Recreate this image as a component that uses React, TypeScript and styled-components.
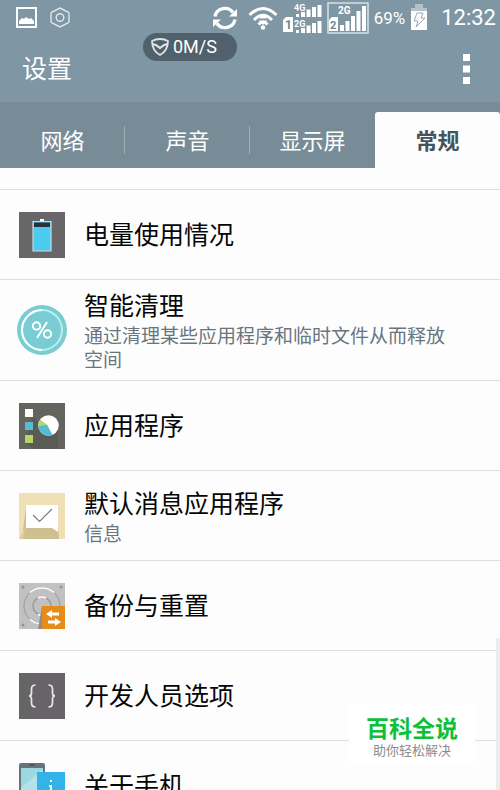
import React from 'react';
import styled, { createGlobalStyle, css } from 'styled-components';

const GlobalStyle = createGlobalStyle`
  *, *::before, *::after { box-sizing: border-box; }
  body {
    margin: 0;
    background: #fdfdfd;
    font-family: Roboto, 'Noto Sans CJK SC', sans-serif;
  }
  button { font: inherit; border: 0; padding: 0; margin: 0; background: none; cursor: pointer; }
  h1, p { margin: 0; }
  svg { display: block; flex: none; }
`;

const Screen = styled.div`
  position: relative;
  display: flex;
  flex-direction: column;
  height: 100vh;
  overflow: hidden;
  background: #fdfdfd;
`;

const Header = styled.header`
  position: relative;
  flex: none;
  background: #7f96a4;
  color: #fff;
`;

const StatusBar = styled.div`
  display: flex;
  align-items: center;
  justify-content: space-between;
  height: 35px;
  padding: 0 4px 0 16px;
`;

const StatusGroup = styled.div<{ $gap: number }>`
  display: flex;
  align-items: center;
  gap: ${({ $gap }) => $gap}px;
`;

const Percent = styled.span`
  font-size: 17px;
  line-height: 20px;
`;

const Clock = styled.time`
  margin-left: 8px;
  font-size: 22px;
  line-height: 28px;
`;

const SpeedPill = styled.div`
  position: absolute;
  top: 33px;
  left: 143px;
  display: flex;
  align-items: center;
  gap: 4px;
  height: 28px;
  padding: 0 20px 0 8px;
  border-radius: 14px;
  background: #50616c;
  font-size: 18px;
  line-height: 28px;
`;

const TitleBar = styled.div`
  display: flex;
  align-items: center;
  justify-content: space-between;
  height: 67px;
  padding: 0 22px;
`;

const Title = styled.h1`
  padding-top: 2px;
  font-size: 25px;
  font-weight: 400;
  line-height: 36px;
`;

const MenuButton = styled.button`
  display: flex;
  justify-content: center;
  width: 24px;
  color: #fff;
`;

const Tabs = styled.nav`
  display: grid;
  flex: none;
  grid-template-columns: repeat(4, 1fr);
  height: 66px;
  padding-top: 10px;
  background: #778c97;
`;

const Tab = styled.button<{ $active: boolean; $divided: boolean }>`
  display: flex;
  align-items: center;
  justify-content: center;
  position: relative;
  padding-top: 4px;
  font-size: 22px;
  line-height: 32px;
  color: #fff;
  ${({ $active }) => $active && css`
    background: #fdfdfd;
    color: #44535e;
    font-weight: 700;
    border-radius: 3px 3px 0 0;
  `}
  ${({ $divided }) => $divided && css`
    &::after {
      content: '';
      position: absolute;
      right: 0;
      top: 14px;
      width: 1px;
      height: 28px;
      background: #a0afb7;
    }
  `}
`;

const List = styled.main`
  flex: 1;
  min-height: 0;
  padding-top: 21px;
  overflow: hidden;
`;

const Row = styled.button`
  display: flex;
  align-items: center;
  gap: 16px;
  width: 100%;
  min-height: 90px;
  padding: 7px 40px 7px 16px;
  border-top: 1px solid #dedede;
  text-align: left;
`;

const RowText = styled.span`
  display: flex;
  flex-direction: column;
  min-width: 0;
  padding-top: 2px;
`;

const RowTitle = styled.span`
  font-size: 25px;
  line-height: 36px;
  color: #050505;
`;

const RowNote = styled.span`
  font-size: 19px;
  line-height: 24px;
  color: #69757d;
`;

const ScrollThumb = styled.div`
  position: absolute;
  top: 638px;
  right: 0;
  bottom: 0;
  width: 4px;
  background: #ececee;
`;

const Watermark = styled.aside`
  position: absolute;
  right: 25px;
  bottom: 25px;
  width: 126px;
  padding: 14px 0 5px;
  border-radius: 3px;
  background: #fff;
  text-align: center;
`;

const Brand = styled.p`
  font-size: 23px;
  font-weight: 700;
  line-height: 24px;
  color: #0bc138;
`;

const Slogan = styled.p`
  font-size: 13px;
  line-height: 18px;
  color: #8c8c8c;
`;

const PictureIcon = () => (
  <svg width="21" height="21" viewBox="0 0 21 21">
    <path d="M1 1h19v19H1z" fill="none" stroke="#fff" strokeWidth="2" />
    <path d="M3 17v-3l3-3 2 1 2-2 3 2 2-1 3 3v3z" fill="#fff" />
  </svg>
);

const HexIcon = () => (
  <svg width="20" height="21" viewBox="0 0 20 21" fill="none" stroke="#dfe8ed" strokeWidth="1.4">
    <path d="M10 1l8 4q1 .6 1 2v7q0 1.400-1 2l-8 4-8-4q-1-.6-1-2V7q0-1.400 1-2z" />
    <circle cx="10" cy="10.500" r="3.800" />
  </svg>
);

const SyncSvg = styled.svg`
  margin-right: 5px;
`;

const SyncIcon = () => (
  <SyncSvg width="26" height="24" viewBox="0 0 26 24">
    <g fill="none" stroke="#fff" strokeWidth="3.400">
      <path d="M3 10.500C4.500 2 16 -.5 21 6.500" />
      <path d="M23 13.500C21.500 22 10 24.500 5 17.500" />
    </g>
    <path d="M25 3v7.500h-8zM1 21v-7.500h8z" fill="#fff" />
  </SyncSvg>
);

const WifiIcon = () => (
  <svg width="30" height="24" viewBox="0 0 30 24">
    <g fill="none" stroke="#fff" strokeWidth="3">
      <path d="M1.500 9Q15-4 28.500 9" />
      <path d="M6 14Q15 4.500 24 14" />
      <path d="M10.500 18.500Q15 13.500 19.500 18.500" />
    </g>
    <circle cx="15" cy="21.500" r="2.300" fill="#fff" />
    <path d="M15 8l4 4.500h-8zM10.500 14.500h9L15 19z" fill="#fff" />
    <path d="M10 13.500h10" stroke="#7f96a4" strokeWidth="1" />
  </svg>
);

const SignalSvg = styled.svg`
  font-family: Roboto, sans-serif;
  font-weight: 700;
`;

const DualSignalIcon = () => (
  <SignalSvg width="39" height="32" viewBox="0 0 39 32" fill="#fff">
    <path d="M3 15h7v15H0V18z" />
    <text x="2" y="27" fontSize="12" fill="#72858f">1</text>
    <path d="M13 12h3v3h-3zM18 10h4v5h-4zM23.500 7.500h4V15h-4zM29 5h4v10h-4zM34.500 3h4v12h-4z" />
    <path d="M13 28h3v3h-3zM18 26h4v5h-4zM23.500 23.500h4V31h-4zM29 21h4v10h-4zM34.500 19h4v12h-4z" />
    <text x="11" y="9" fontSize="9">4G</text>
    <text x="11" y="25" fontSize="9">2G</text>
  </SignalSvg>
);

const SignalIcon = () => (
  <SignalSvg width="42" height="32" viewBox="0 0 42 32" fill="#fff">
    <path d="M1 1h40v30H1z" fill="none" stroke="#d5e0e7" strokeWidth="1.600" />
    <path d="M5 15h6v14H2V18z" />
    <text x="3" y="27" fontSize="11" fill="#72858f">2</text>
    <path d="M13 23h4v6h-4zM18.500 19h4v10h-4zM24 14h4v15h-4zM29.500 9h4v20h-4zM35 4h4v25h-4z" />
    <text x="11" y="12" fontSize="10">2G</text>
  </SignalSvg>
);

const BatteryIcon = () => (
  <svg width="18" height="27" viewBox="0 0 18 27">
    <path d="M5 0h8v4h4v4H1V4h4z" fill="#b4c1c9" />
    <path d="M1 7h16v19H1z" fill="#fff" />
    <path d="M7 9h6l-2 5h4L6 23l2-6H4z" fill="#fff" stroke="#9caab2" strokeWidth="1" />
  </svg>
);

const ShieldIcon = () => (
  <svg width="18" height="18" viewBox="0 0 18 18" fill="none" stroke="#dfe5e8" strokeWidth="1.800">
    <path d="M9 1q4.500 0 8 2-.2 10-8 14Q1.200 13 1 3q3.500-2 8-2z" strokeLinejoin="round" />
    <path d="M2 6q3 .5 7 4 4-3.500 7-4" strokeWidth="2.200" />
  </svg>
);

const DotsIcon = () => (
  <svg width="7" height="30" viewBox="0 0 7 30" fill="#fff">
    <path d="M0 0h7v7H0zM0 11.500h7v7H0zM0 23h7v7H0z" />
  </svg>
);

const IconBox = ({ children }: { children: React.ReactNode }) => (
  <svg width="52" height="52" viewBox="0 0 52 52" aria-hidden="true">{children}</svg>
);

const PowerIcon = () => (
  <IconBox>
    <path d="M3 3h46v46H3z" fill="#686669" />
    <path d="M17 12.500h18v29.500H17z" fill="#4ccbf0" stroke="#c9dade" strokeWidth="1.200" />
    <path d="M18 13.500h16V18H18z" fill="#25323a" />
    <path d="M24 10h4v2h-4z" fill="#fff" />
  </IconBox>
);

const CleanIcon = () => (
  <IconBox>
    <circle cx="26" cy="26" r="25" fill="#79ccd1" />
    <circle cx="26" cy="26" r="20" fill="none" stroke="#b8eff1" strokeWidth="2" />
    <path d="M26 46A20 20 0 1 1 26 6" fill="none" stroke="#fff" strokeWidth="2" />
    <g fill="none" stroke="#fff" strokeWidth="2">
      <circle cx="20.500" cy="22" r="3.700" />
      <circle cx="31.500" cy="30" r="3.700" />
      <path d="M31 18L21 34" />
    </g>
  </IconBox>
);

const AppsIcon = () => (
  <IconBox>
    <path d="M3 3h46v46H3z" fill="#62645d" />
    <path d="M17 17l9 9v23h-7L9 43zM42 27v22H25V32z" fill="#5a5b55" />
    <path d="M9 9h8v8H9z" fill="#fff" />
    <path d="M9 22h8v8H9z" fill="#54bdd4" />
    <path d="M9 35h8v8H9z" fill="#b7d566" />
    <circle cx="32.500" cy="25.500" r="10.300" fill="#fff" />
    <path d="M31 24.500l5.500 10.500A10.300 10.300 0 0 1 22.200 25.500z" fill="#54bdd4" />
    <path d="M31 24.500l-8.800 2Q22 23 24.500 20z" fill="#b7d566" />
  </IconBox>
);

const MessageIcon = () => (
  <IconBox>
    <path d="M3 3h46v46H3z" fill="#efe1b5" />
    <path d="M10 16L6 49h37l-1-13z" fill="#cebf91" />
    <path d="M3 49l6-12-2 12z" fill="#e0cf9d" />
    <path d="M10 15h32v27l-6-4H10z" fill="#fff" />
    <path d="M17 25l6.500 6.500L36 19" fill="none" stroke="#747b84" strokeWidth="1.100" />
  </IconBox>
);

const BackupIcon = () => (
  <IconBox>
    <path d="M3 3h46v46H3z" fill="#c1c0c2" />
    <g fill="none" stroke="#999a9d">
      <circle cx="26" cy="26" r="18" />
      <circle cx="26" cy="26" r="9" strokeWidth="1.500" />
    </g>
    <g fill="none" stroke="#fff" strokeWidth="1.500">
      <path d="M14 12.500A18 18 0 0 1 38 12.500M14 39.500q4 3.500 9 4.300M22 18q4-2 8 0M22 34.500q2 1 4 .5" />
    </g>
    <g fill="#929397">
      <circle cx="7" cy="7" r="1.500" /><circle cx="45" cy="7" r="1.500" /><circle cx="7" cy="45" r="1.500" />
    </g>
    <path d="M26 26l-4 23h5z" fill="#8e8c8a" />
    <path d="M26 26h23v23H26z" fill="#e68c18" />
    <path d="M30 34l6-4v2.500h7v3h-7V38zM45 42l-6-4v2.500h-7v3h7V46z" fill="#fff" />
  </IconBox>
);

const BracesIcon = () => (
  <IconBox>
    <path d="M3 3h46v46H3z" fill="#676468" />
    <path d="M19.500 15q-4 0-4 4v4q0 3-2.500 3 2.500 0 2.500 3v4q0 4 4 4M32.500 15q4 0 4 4v4q0 3 2.500 3-2.500 0-2.500 3v4q0 4-4 4" fill="none" stroke="#e9e8e9" strokeWidth="1.700" />
  </IconBox>
);

const PhoneIcon = () => (
  <IconBox>
    <rect x="3" y="3" width="26" height="46" rx="2" fill="#66747c" />
    <path d="M5 8h22v36H5z" fill="#9cd8df" />
    <path d="M5 28L27 9v35H5z" fill="#b4e2e6" />
    <path d="M13 5h6" stroke="#32404b" strokeWidth="1" />
    <path d="M21 12h28v37H21z" fill="#34b3eb" />
    <path d="M34 20h2v2h-2zM33 25h3v13h2v2h-6v-2h2V27h-1z" fill="#fff" />
  </IconBox>
);

const tabs = ['网络', '声音', '显示屏', '常规'];

const settings = [
  { title: '电量使用情况', Icon: PowerIcon },
  { title: '智能清理', note: '通过清理某些应用程序和临时文件从而释放空间', Icon: CleanIcon },
  { title: '应用程序', Icon: AppsIcon },
  { title: '默认消息应用程序', note: '信息', Icon: MessageIcon },
  { title: '备份与重置', Icon: BackupIcon },
  { title: '开发人员选项', Icon: BracesIcon },
  { title: '关于手机', Icon: PhoneIcon },
];

export default function App() {
  const [active, setActive] = React.useState(3);
  return (
    <Screen>
      <GlobalStyle />
      <Header>
        <StatusBar>
          <StatusGroup $gap={13}>
            <PictureIcon />
            <HexIcon />
          </StatusGroup>
          <StatusGroup $gap={5}>
            <SyncIcon />
            <WifiIcon />
            <DualSignalIcon />
            <SignalIcon />
            <Percent>69%</Percent>
            <BatteryIcon />
            <Clock>12:32</Clock>
          </StatusGroup>
        </StatusBar>
        <TitleBar>
          <Title>设置</Title>
          <MenuButton aria-label="菜单"><DotsIcon /></MenuButton>
        </TitleBar>
        <SpeedPill><ShieldIcon />0M/S</SpeedPill>
      </Header>
      <Tabs>
        {tabs.map((name, i) => (
          <Tab
            key={name}
            $active={i === active}
            $divided={i !== active && i + 1 !== active && i < tabs.length - 1}
            onClick={() => setActive(i)}
          >
            {name}
          </Tab>
        ))}
      </Tabs>
      <List>
        {settings.map(({ title, note, Icon }) => (
          <Row key={title}>
            <Icon />
            <RowText>
              <RowTitle>{title}</RowTitle>
              {note && <RowNote>{note}</RowNote>}
            </RowText>
          </Row>
        ))}
      </List>
      <ScrollThumb />
      <Watermark>
        <Brand>百科全说</Brand>
        <Slogan>助你轻松解决</Slogan>
      </Watermark>
    </Screen>
  );
}
